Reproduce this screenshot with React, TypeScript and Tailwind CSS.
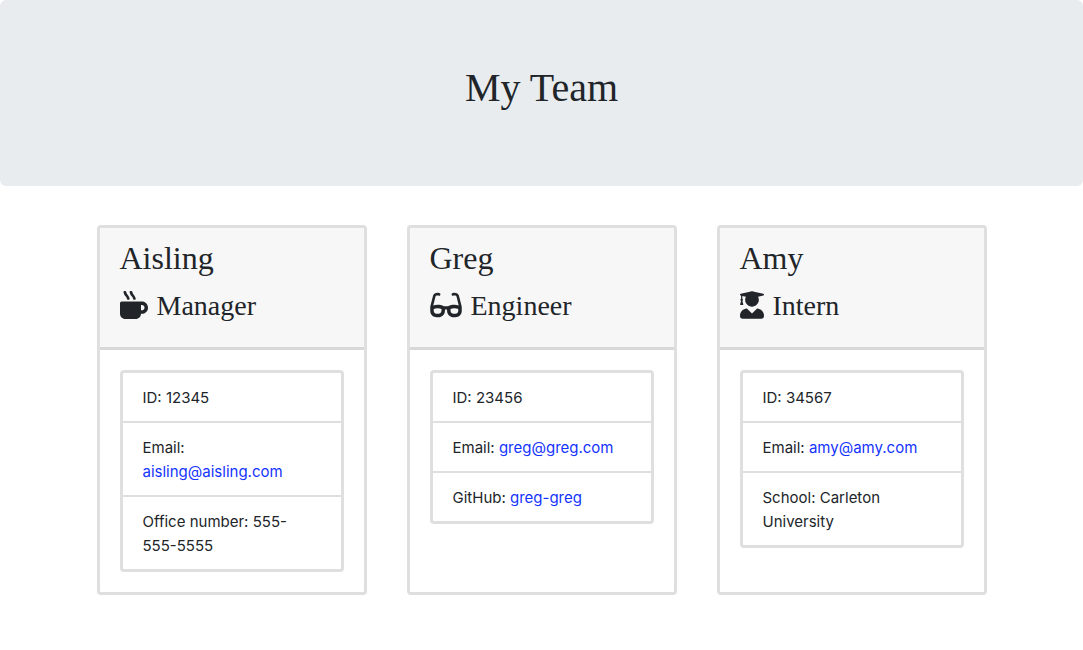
import type { ReactNode } from 'react';
import { FaGlasses, FaMugHot, FaUserGraduate } from 'react-icons/fa';

type Detail = { label: string; value: string; href?: string };
type Member = { name: string; role: string; icon: ReactNode; details: Detail[] };

const team: Member[] = [
  {
    name: 'Aisling',
    role: 'Manager',
    icon: <FaMugHot className="mb-0.5 h-7 w-7" aria-hidden="true" />,
    details: [
      { label: 'ID', value: '12345' },
      { label: 'Email', value: 'aisling@aisling.com', href: 'mailto:aisling@aisling.com' },
      { label: 'Office number', value: '555-555-5555' },
    ],
  },
  {
    name: 'Greg',
    role: 'Engineer',
    icon: <FaGlasses className="mb-0.5 h-7 w-8" aria-hidden="true" />,
    details: [
      { label: 'ID', value: '23456' },
      { label: 'Email', value: 'greg@greg.com', href: 'mailto:greg@greg.com' },
      { label: 'GitHub', value: 'greg-greg', href: 'https://github.com/greg-greg' },
    ],
  },
  {
    name: 'Amy',
    role: 'Intern',
    icon: <FaUserGraduate className="mb-0.5 h-7 w-6" aria-hidden="true" />,
    details: [
      { label: 'ID', value: '34567' },
      { label: 'Email', value: 'amy@amy.com', href: 'mailto:amy@amy.com' },
      { label: 'School', value: 'Carleton University' },
    ],
  },
];

function MemberCard({ member }: { member: Member }) {
  return (
    <article className="flex w-[270px] flex-col rounded border-3 border-[#dfdfdf] bg-white">
      <header className="border-b-3 border-[#d8d8d8] bg-[#f7f7f7] px-5 pt-[11px] pb-6 font-['Liberation_Serif',serif]">
        <h2 className="mb-3 text-[32px] leading-[38px]">{member.name}</h2>
        <h3 className="flex items-center gap-[9px] text-[28px] leading-[34px]">
          {member.icon}
          {member.role}
        </h3>
      </header>
      <div className="p-5">
        <ul className="divide-y-2 divide-[#dfdfdf] rounded border-3 border-[#dfdfdf]">
          {member.details.map((detail) => (
            <li key={detail.label} className="px-5 pt-[13px] pb-[11px]">
              {detail.label}:{' '}
              {detail.href ? (
                <a href={detail.href} className="text-[#1433ff] hover:underline">
                  {detail.value}
                </a>
              ) : (
                detail.value
              )}
            </li>
          ))}
        </ul>
      </div>
    </article>
  );
}

export default function App() {
  return (
    <div className="font-['Inter',sans-serif] text-[15px] leading-6 text-[#212529]">
      <header className="mb-[39px] rounded-md bg-[#e8ecef] px-8 pt-16 pb-[74px]">
        <h1 className="text-center font-['Liberation_Serif',serif] text-[40px] leading-[48px]">
          My Team
        </h1>
      </header>
      <main className="flex flex-wrap justify-center gap-10 px-4 pb-10">
        {team.map((member) => (
          <MemberCard key={member.name} member={member} />
        ))}
      </main>
    </div>
  );
}
